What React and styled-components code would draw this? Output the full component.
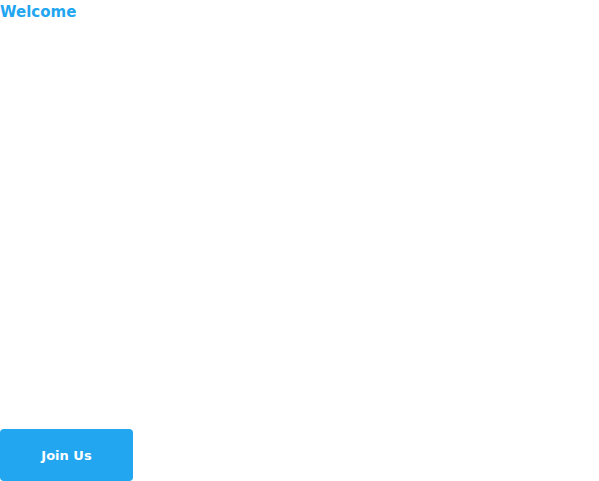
import styled, { createGlobalStyle } from "styled-components";

const GlobalStyle = createGlobalStyle`
  html, body, #root {
    margin: 0;
    height: 100%;
  }
  body {
    font-family: "DejaVu Sans", "Noto Sans", sans-serif;
    background: #ffffff;
  }
`;

const Page = styled.div`
  height: 100%;
  display: flex;
  flex-direction: column;
  justify-content: space-between;
  align-items: flex-start;
`;

const Title = styled.h1`
  margin: 0;
  padding-top: 3px;
  font-size: 15px;
  font-weight: 700;
  line-height: 18px;
  color: #22a6f0;
`;

const JoinButton = styled.button`
  width: 133px;
  height: 52px;
  border: none;
  border-radius: 4px;
  background: #22a6f0;
  color: #ffffff;
  font-family: inherit;
  font-size: 13px;
  font-weight: 700;
  cursor: pointer;
`;

const App = () => {
  return (
    <>
      <GlobalStyle />
      <Page>
        <Title>Welcome</Title>
        <JoinButton>Join Us</JoinButton>
      </Page>
    </>
  );
};

export default App;
